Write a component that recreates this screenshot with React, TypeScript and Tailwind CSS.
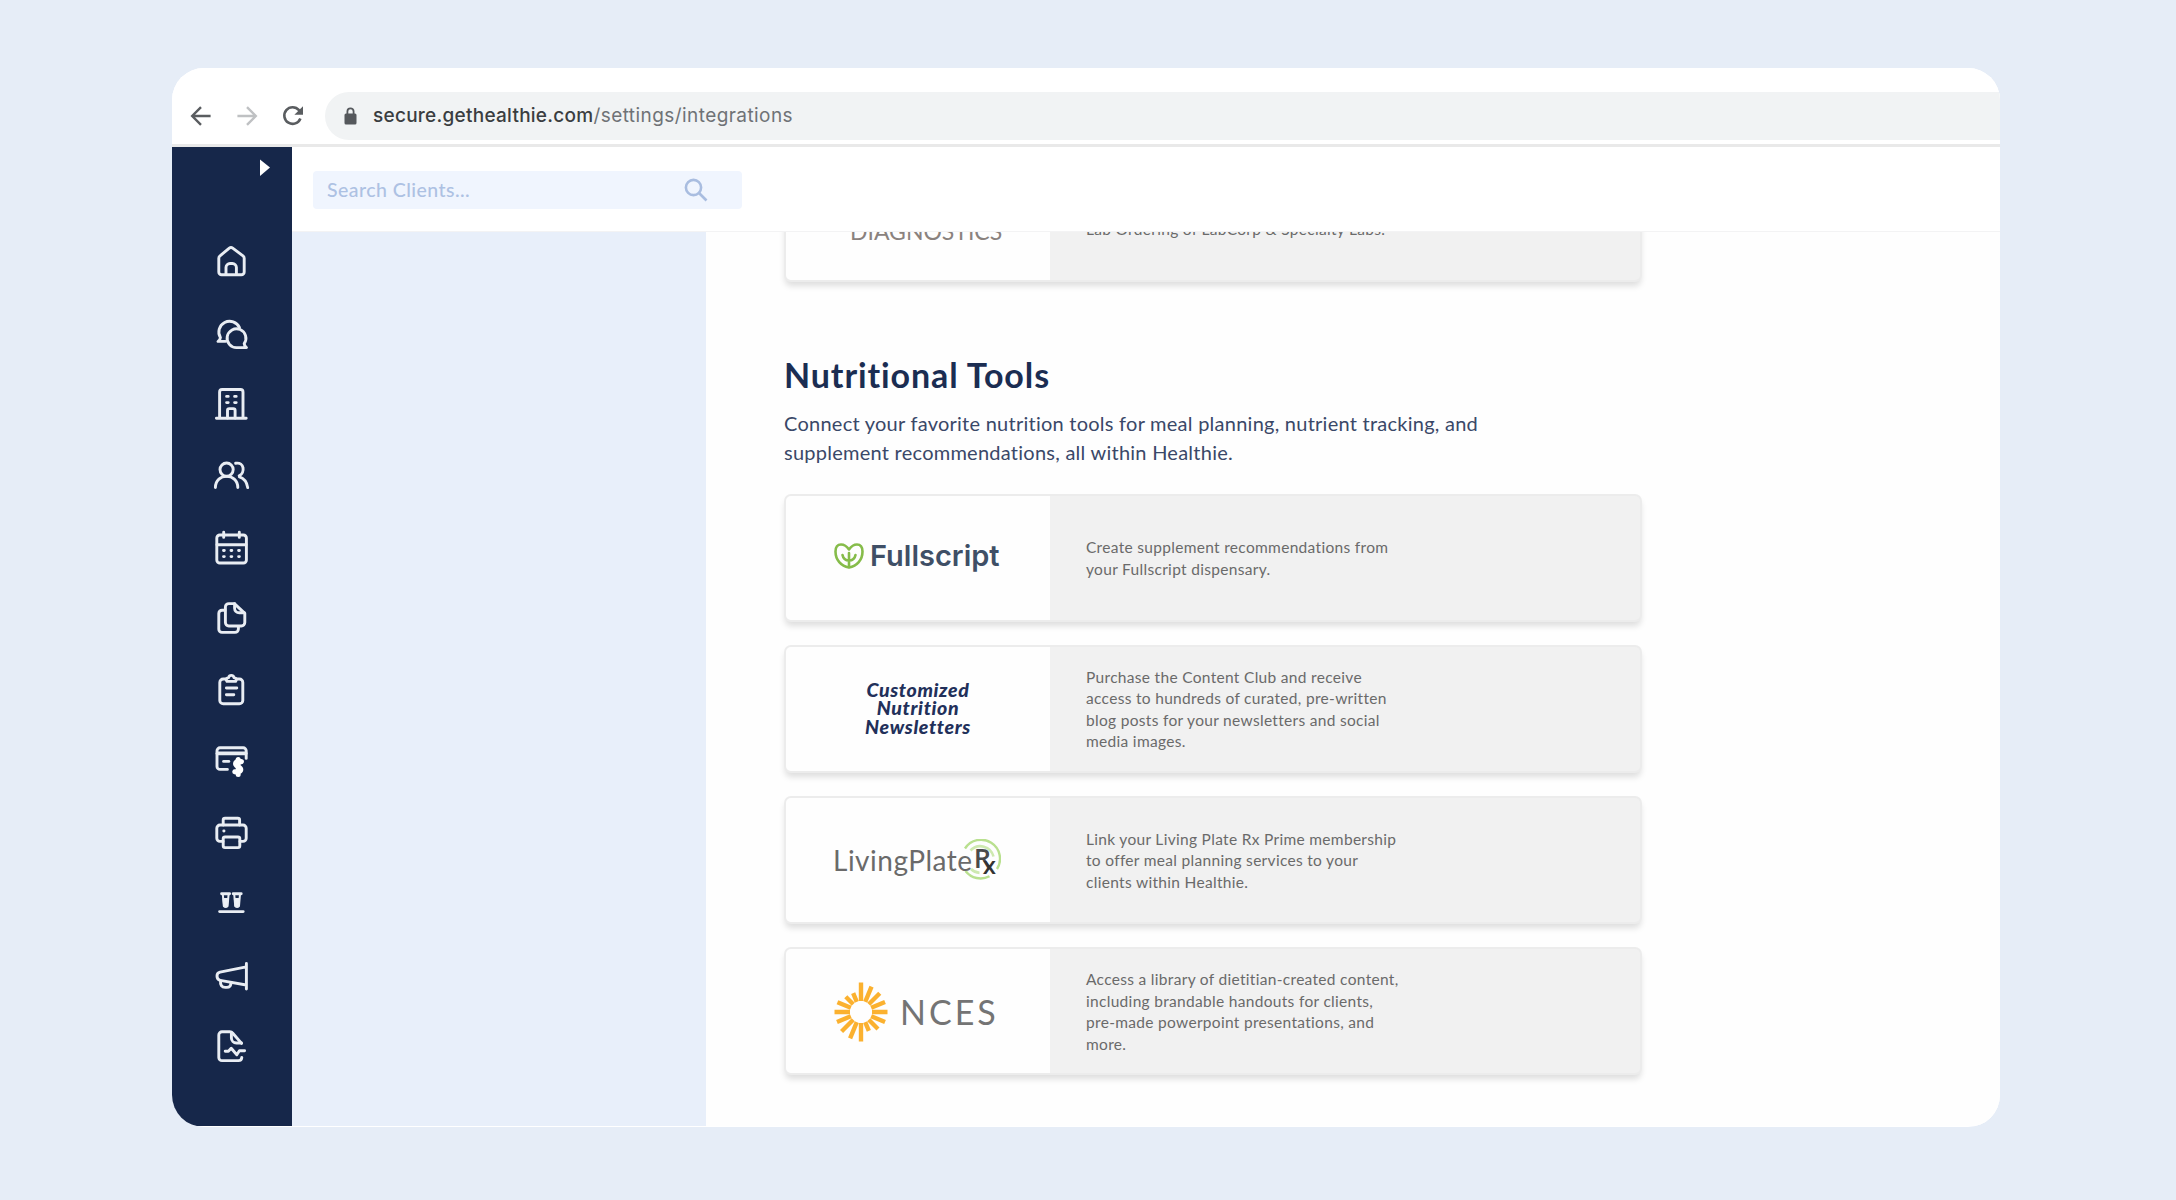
import type { ReactNode } from "react";

function NavIcon({ children }: { children: ReactNode }) {
  return (
    <div className="flex h-[71.4px] w-full items-center justify-center">
      <svg
        className="-ml-0.5 size-10 shrink-0"
        viewBox="0 0 40 40"
        fill="none"
        stroke="#e9edf3"
        strokeWidth="2.9"
        strokeLinecap="round"
        strokeLinejoin="round"
      >
        {children}
      </svg>
    </div>
  );
}

function Sidebar() {
  return (
    <nav className="flex w-[120px] shrink-0 flex-col bg-[#16274a]">
      <div className="flex h-[78.5px] shrink-0 justify-end pt-3 pr-[21.5px]">
        <svg className="h-[18px] w-3" viewBox="0 0 12 18" fill="#fff">
          <path d="M1 0.5 L11 8.5 L1 17 Z" />
        </svg>
      </div>
      <NavIcon>
        <path d="M7.8 17.2q0-1.5 1.2-2.4L18.3 7.2q1.7-1.3 3.4 0L32 14.8q1.2 1 1.2 2.4V31a2.8 2.8 0 0 1-2.8 2.8H10.6A2.8 2.8 0 0 1 7.8 31Z" />
        <path d="M15 33.5V26.5a4 4 0 0 1 4-4h2.4a4 4 0 0 1 4 4v7" />
      </NavIcon>
      <NavIcon>
        <path d="M28.5 14.6A10.8 10.8 0 1 0 9.4 24.6Q9.2 27 7 28.4h7.5" />
        <path d="M33.2 30.6A9.4 9.4 0 1 0 25.8 34.6h9.7q-2.2-1.6-2.3-4Z" />
      </NavIcon>
      <NavIcon>
        <path d="M5.4 34.2h29.8M8.6 34V8a2.5 2.5 0 0 1 2.5-2.5h18.4A2.5 2.5 0 0 1 32 8v26" />
        <path d="M16.5 34v-7.6a1.8 1.8 0 0 1 1.8-1.8h4a1.8 1.8 0 0 1 1.8 1.8V34" />
        <path d="M15.6 12.4h1.6M23.6 12.4h1.6M15.6 18.6h1.6M23.6 18.6h1.6" />
      </NavIcon>
      <NavIcon>
        <circle cx="15.6" cy="14.6" r="6.6" />
        <path d="M4.4 32.6c0-15 22.4-15 22.4 0" />
        <path d="M24.6 8.3c9-1.6 9.6 9.4 3.6 12.6M28.4 21.8c5 1.6 7.6 6 8.3 10.8" />
      </NavIcon>
      <NavIcon>
        <rect x="5.8" y="8" width="29.6" height="28" rx="3" />
        <path d="M6 17.8h29M12.7 5.2v5.2M28.3 5.2v5.2" />
        <path d="M12.5 23.5h.8M20 23.5h.8M27.6 23.5h.8M12.5 29.6h.8M20 29.6h.8M27.6 29.6h.8" />
      </NavIcon>
      <NavIcon>
        <path d="M23.4 5.6h-5.6a3.4 3.4 0 0 0-3.4 3.4v15.6a3.4 3.4 0 0 0 3.4 3.4h12.6a3.4 3.4 0 0 0 3.4-3.4V15.4Z" />
        <path d="M23.6 5.8v4.4a4.6 4.6 0 0 0 4.6 4.6h5" />
        <path d="M14 12.2h-3a3.2 3.2 0 0 0-3.2 3.2v15.8a3.2 3.2 0 0 0 3.2 3.2h13a3.4 3.4 0 0 0 3.4-3.4V29" />
      </NavIcon>
      <NavIcon>
        <path d="M15 9h-2.8a3.4 3.4 0 0 0-3.4 3.4v18a3.4 3.4 0 0 0 3.4 3.4h16.2a3.4 3.4 0 0 0 3.4-3.4v-18A3.4 3.4 0 0 0 28.4 9h-2.8" />
        <path d="M16 11.4c-2-3 .6-3.6 1.6-3.8.8-3 4.6-3 5.4 0 1 .2 3.6.8 1.6 3.8Z" />
        <path d="M15.4 18h10.4M15.4 24.8h7.4" />
      </NavIcon>
      <NavIcon>
        <path d="M35.2 17.4V9.8a3 3 0 0 0-3-3H9a3 3 0 0 0-3 3v15.6a3 3 0 0 0 3 3h7.4" />
        <path d="M6.4 12.4h28.4" strokeWidth="3.6" />
        <path d="M12.6 20.4h5.2" />
        <path d="M30.4 20.6c-5.6-2-8 3-3.4 5s3.4 6.4-3.2 5.2M27.2 18.4v15" strokeWidth="5" stroke="#fff" />
      </NavIcon>
      <NavIcon>
        <path d="M12.2 13V8a1.8 1.8 0 0 1 1.8-1.8h12.8A1.8 1.8 0 0 1 28.6 8v5" />
        <path d="M12 29.4H9a3.2 3.2 0 0 1-3.2-3.2v-10A3.2 3.2 0 0 1 9 13h23a3.2 3.2 0 0 1 3.2 3.2v10a3.2 3.2 0 0 1-3.2 3.2h-3" />
        <rect x="12.2" y="25" width="16.6" height="10.6" rx="1.8" />
        <path d="M12.8 19h.2" />
      </NavIcon>
      <NavIcon>
        <path d="M10.6 9.8h8M22.2 9.8h8M8.6 27.6h23.6" />
        <path d="M11.8 10l1 12q1.9 2 3.8 0l1-12M23.2 10l1 12q1.9 2 3.8 0l1-12" strokeWidth="2" />
        <path d="M12.3 14.5h4.9l-.8 8h-3.3zM23.7 14.5h4.9l-.8 8h-3.3z" fill="#eef1f6" strokeWidth="1" />
      </NavIcon>
      <NavIcon>
        <path d="M35.4 8.4v25.6M35.2 11.8L9 17.2q-3 .8-3 3.8 0 3.4 3.2 4.4L35.2 30" />
        <path d="M9.6 25.8c-.6 4 1.2 6.6 4.6 6.6h1.6c3 0 4.2-2.4 4.2-5" />
      </NavIcon>
      <NavIcon>
        <path d="M30.6 17.4L21.8 7.2Q20.6 5.8 18.8 5.8H11a3.2 3.2 0 0 0-3.2 3.2v22.4a3.2 3.2 0 0 0 3.2 3.2h16.4a3.4 3.4 0 0 0 3.4-3.2" />
        <path d="M20.4 6.6v5.4a5 5 0 0 0 5 5h5" />
        <path d="M14.2 25.2h3.2l2.8-3 5.6 6.6 2.6-4h5.2" />
      </NavIcon>
    </nav>
  );
}

function BrowserBar() {
  return (
    <div className="flex h-[79px] shrink-0 items-start border-b-[3px] border-[#e9e9e9] bg-white pt-6">
      <div className="flex h-12 w-[153px] shrink-0 items-center gap-6 pl-[18px]">
        <svg className="size-[22px]" viewBox="0 0 22 22" fill="none" stroke="#5a5d60" strokeWidth="2.4">
          <path d="M20.6 11H3M11 2.2L2.2 11l8.8 8.8" />
        </svg>
        <svg className="size-[22px]" viewBox="0 0 22 22" fill="none" stroke="#bfc1c3" strokeWidth="2.4">
          <path d="M1.4 11H19M11 2.2l8.8 8.8-8.8 8.8" />
        </svg>
        <svg className="size-[22px]" viewBox="0 0 22 22" fill="none" stroke="#5a5d60" strokeWidth="2.6">
          <path d="M18.4 13.5A8.3 8.3 0 1 1 17 5.2l1.8 2" />
          <path d="M21 1.2v8.6h-8.6z" fill="#5a5d60" stroke="none" />
        </svg>
      </div>
      <div className="flex h-12 flex-1 items-center rounded-l-full bg-[#f1f3f4] pl-[19px] font-['Inter',sans-serif] text-[19px]">
        <svg className="mr-4 h-[18px] w-[13px]" viewBox="0 0 13 18">
          <rect x="0.5" y="6.5" width="12" height="11" rx="1.5" fill="#55585c" />
          <path d="M3.4 7V4.4a3.1 3.1 0 0 1 6.2 0V7" fill="none" stroke="#55585c" strokeWidth="1.8" />
        </svg>
        <span className="font-medium tracking-[0.26px] text-[#3a3d40]">secure.gethealthie.com</span>
        <span className="tracking-[0.43px] text-[#6f7276]">/settings/integrations</span>
      </div>
    </div>
  );
}

function Card({ logo, lines }: { logo: ReactNode; lines: string[] }) {
  return (
    <article className="ml-0.5 flex h-[124px] w-[854px] shrink-0 overflow-hidden rounded-[5px] bg-[#f1f1f1] shadow-[0_0_0_2px_#ececec,0_5px_6px_1px_rgba(0,0,0,0.13)]">
      <div className="flex w-[264px] shrink-0 items-center justify-start bg-[#fefefe]">{logo}</div>
      <div className="flex flex-col justify-center pt-0.5 pl-9 font-['Lato',sans-serif] text-[15.5px] leading-[21.5px] tracking-[0.31px] whitespace-nowrap text-[#6a6a6a]">
        {lines.map((l) => (
          <div key={l}>{l}</div>
        ))}
      </div>
    </article>
  );
}

const rayLengths = [29.5, 27.5, 26.5, 26, 26.5, 26, 24, 20.5, 29.5, 28.5, 27.5, 26, 26.5, 25.5, 21.5, 20.5];

function Sun() {
  return (
    <svg className="h-[60px] w-[54px]" viewBox="-27 -30 54 60" stroke="#fbb12f" strokeWidth="4.4">
      {rayLengths.map((r, i) => (
        <line key={i} x1="0" y1="-11" x2="0" y2={-r} transform={`rotate(${i * 22.5})`} />
      ))}
    </svg>
  );
}

function FullscriptLogo() {
  return (
    <div className="flex items-center gap-1.5 pb-[3px] pl-[48px]">
      <svg
        className="h-[26px] w-[30px]"
        viewBox="0 0 30 26"
        fill="none"
        stroke="#86bc4a"
        strokeWidth="2.6"
        strokeLinecap="round"
        strokeLinejoin="round"
      >
        <path d="M15 6.5C12.5 2.8 9.500 1.500 7 1.500 3.500 1.500 1.500 4 1.500 8.500 1.500 17 7 23 15 24.500 23 23 28.500 17 28.500 8.500 28.500 4 26.500 1.500 23 1.500c-2.500 0-5.500 1.300-8 5Z" />
        <path d="M15 10v14M15 17.500c-3.500 0-5.800-2-6.500-5.500M15 17.500c3.500 0 5.800-2 6.500-5.500" />
      </svg>
      <span className="font-['Inter',sans-serif] text-[29px] font-semibold text-[#3f4f66]">Fullscript</span>
    </div>
  );
}

function LivingPlateLogo() {
  return (
    <div className="relative flex h-[41px] w-[215px] items-center pl-[47px] font-['Lato',sans-serif]">
      <svg className="absolute top-0 right-0 size-[41px]" viewBox="-20.5 -20.5 41 41" fill="none" stroke="#b9e08f">
        <path d="M-15.500 -11A19 19 0 1 1 16.500 9.500M9 16.700A19 19 0 0 1-15 11.500" strokeWidth="2.400" />
        <path d="M-10 -9A13.500 13.500 0 0 1 13 -3M-9.500 9.500A13.500 13.500 0 0 0 -1 13.400" strokeWidth="2.600" opacity="0.7" />
      </svg>
      <span className="relative text-[28px] tracking-[0.5px] text-[#6a6a6a]">LivingPlate</span>
      <span className="absolute top-1 right-[10px] font-['Open_Sans',sans-serif] text-[27px] leading-[30px] font-semibold text-[#4a4a4a]">R</span>
      <span className="absolute top-[12px] right-[5px] font-['Open_Sans',sans-serif] text-[24px] leading-[28px] font-semibold text-[#333]">x</span>
    </div>
  );
}

export default function App() {
  return (
    <div className="h-[1200px] w-[2176px] overflow-hidden bg-[#e6edf7] pt-[68px] pl-[172px]">
      <div className="flex h-[1059px] w-[1828px] flex-col overflow-hidden rounded-[32px] bg-white">
        <BrowserBar />
        <div className="flex h-[979px] shrink-0">
          <Sidebar />
          <div className="flex flex-1 flex-col">
            <header className="flex h-[85px] shrink-0 items-start border-b border-[#f3f3f4] bg-white pt-6 pl-[21px]">
              <div className="flex h-[38px] w-[429px] items-center justify-between rounded bg-[#f0f5fe] pr-[34px] pl-[14px]">
                <span className="font-['Lato',sans-serif] text-[19.5px] font-medium tracking-[0.45px] text-[#adc1e3]">Search Clients...</span>
                <svg className="size-6" viewBox="0 0 24 24" fill="none" stroke="#a9bde0" strokeWidth="2.6">
                  <circle cx="9.5" cy="9.5" r="7.6" />
                  <path d="M15 15l7.5 7.5" />
                </svg>
              </div>
            </header>
            <div className="flex h-[894px] overflow-hidden">
              <aside className="w-[414px] shrink-0 bg-[#e8effa]" />
              <main className="flex flex-1 flex-col overflow-hidden bg-[#fefefe] pl-[78px]">
                <div className="-mt-[76px]">
                  <Card
                    logo={
                      <div className="pt-[26px] pl-[64px] font-['Lato',sans-serif] text-[23px] leading-[30px] text-[#8a827e]">
                        DIAGNOSTICS
                      </div>
                    }
                    lines={["Order labs directly with Access", "Lab Ordering of LabCorp & Specialty Labs."]}
                  />
                </div>
                <h2 className="mt-[75px] font-['Lato',sans-serif] text-[34px] leading-[40px] font-bold tracking-[0.9px] text-[#1b2d52]">
                  Nutritional Tools
                </h2>
                <p className="mt-[13.5px] font-['Lato',sans-serif] text-[20px] leading-[29px] tracking-[0.25px] text-[#3a4868]">
                  Connect your favorite nutrition tools for meal planning, nutrient tracking, and
                  <br />
                  supplement recommendations, all within Healthie.
                </p>
                <div className="mt-[29px] flex flex-col gap-[27.2px]">
                  <Card
                    logo={<FullscriptLogo />}
                    lines={["Create supplement recommendations from", "your Fullscript dispensary."]}
                  />
                  <Card
                    logo={
                      <div className="flex w-full flex-col items-center font-['Lato',sans-serif] text-[19.5px] leading-[18.5px] font-black tracking-[0.65px] text-[#22305a] italic">
                        <span>Customized</span>
                        <span>Nutrition</span>
                        <span>Newsletters</span>
                      </div>
                    }
                    lines={[
                      "Purchase the Content Club and receive",
                      "access to hundreds of curated, pre-written",
                      "blog posts for your newsletters and social",
                      "media images.",
                    ]}
                  />
                  <Card
                    logo={<LivingPlateLogo />}
                    lines={[
                      "Link your Living Plate Rx Prime membership",
                      "to offer meal planning services to your",
                      "clients within Healthie.",
                    ]}
                  />
                  <Card
                    logo={
                      <div className="flex items-center gap-3 pt-px pl-[48px]">
                        <Sun />
                        <span className="font-['Lato',sans-serif] text-[34px] tracking-[3px] text-[#747474]">NCES</span>
                      </div>
                    }
                    lines={[
                      "Access a library of dietitian-created content,",
                      "including brandable handouts for clients,",
                      "pre-made powerpoint presentations, and",
                      "more.",
                    ]}
                  />
                </div>
              </main>
            </div>
          </div>
        </div>
      </div>
    </div>
  );
}
